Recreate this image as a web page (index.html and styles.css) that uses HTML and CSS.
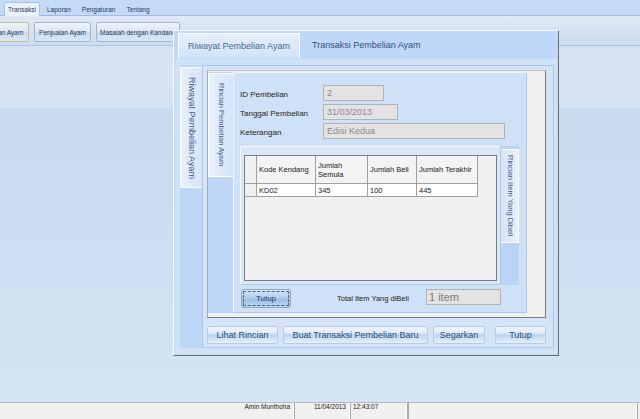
FILE: index.html
```html
<!DOCTYPE html>
<html>
<head>
<meta charset="utf-8">
<title>Riwayat Pembelian Ayam</title>
<link rel="stylesheet" href="styles.css">
</head>
<body>
<div class="app">
  <div class="menubar">
    <span class="menu-tab active">Transaksi</span>
    <span class="menu-tab">Laporan</span>
    <span class="menu-tab">Pengaturan</span>
    <span class="menu-tab">Tentang</span>
  </div>
  <div class="ribbon">
    <button class="rb-btn first">Pembelian Ayam</button>
    <button class="rb-btn second">Penjualan Ayam</button>
    <button class="rb-btn third">Masalah dengan Kandang</button>
  </div>
  <div class="desktop"></div>
  <div class="statusbar">
    <div class="sb-panel sb-user">Amin Munthoha</div>
    <div class="sb-panel sb-date">11/04/2013</div>
    <div class="sb-panel sb-time">12:43:07</div>
    <div class="sb-panel sb-rest"></div>
  </div>

  <div class="window">
    <div class="htab-head">
      <div class="htab sel">Riwayat Pembelian Ayam</div>
      <div class="htab">Transaksi Pembelian Ayam</div>
    </div>
    <div class="htab-page">
      <div class="vstrip"><div class="vtab vtab-main">Riwayat Pembelian Ayam</div></div>
      <div class="vpage">
        <div class="gpanel">
          <div class="rtabs">
            <div class="rstrip"><div class="vtab vtab-r">Rincian Pembelian Ayam</div></div>
            <div class="rpage">
              <div class="fields">
                <div class="flabel">ID Pembelian</div><div class="tbox w-id">2</div>
                <div class="flabel">Tanggal Pembelian</div><div class="tbox w-date">31/03/2013</div>
                <div class="flabel">Keterangan</div><div class="tbox w-ket">Edisi Kedua</div>
              </div>
              <div class="itabs">
                <div class="ipage">
                  <div class="grid">
                    <div class="gh rh"></div>
                    <div class="gh">Kode Kendang</div>
                    <div class="gh">Jumlah<br>Semula</div>
                    <div class="gh">Jumlah Beli</div>
                    <div class="gh">Jumlah Terakhir</div>
                    <div class="gc rh"></div>
                    <div class="gc">KD02</div>
                    <div class="gc">345</div>
                    <div class="gc">100</div>
                    <div class="gc">445</div>
                  </div>
                </div>
                <div class="istrip"><div class="vtab vtab-i">Rincian Item Yang Dibeli</div></div>
              </div>
              <div class="totals">
                <button class="btn-focus">Tutup</button>
                <span class="tlabel">Total Item Yang diBeli</span>
                <div class="tbox w-total">1 item</div>
              </div>
            </div>
          </div>
        </div>
        <div class="actions">
          <button class="btn b-lihat">Lihat Rincian</button>
          <button class="btn b-buat">Buat Transaksi Pembelian Baru</button>
          <button class="btn b-seg">Segarkan</button>
          <button class="btn b-tutup">Tutup</button>
        </div>
      </div>
    </div>
  </div>
</div>
</body>
</html>
```

FILE: styles.css
```css
* { box-sizing: border-box; }
html, body { margin: 0; padding: 0; }
body {
  width: 640px;
  height: 419px;
  overflow: hidden;
  font-family: "Liberation Sans", Arial, sans-serif;
}
button { font-family: "Liberation Sans", Arial, sans-serif; margin: 0; padding: 0; }

.app {
  position: relative;
  width: 640px;
  height: 419px;
  display: flex;
  flex-direction: column;
  background: #d4e3f3;
}

/* ---------- menu strip ---------- */
.menubar {
  height: 16px;
  flex: none;
  background: #c4daf7;
  border-bottom: 1px solid #9fbadc;
  display: flex;
  align-items: flex-end;
  padding-left: 4px;
  gap: 3px;
}
.menu-tab {
  height: 14px;
  line-height: 13px;
  padding: 0 3px;
  font-size: 6.5px;
  color: #1f3b63;
  margin-bottom: -1px;
  border: 1px solid transparent;
  border-bottom: none;
}
.menu-tab.active {
  background: #eaf1fb;
  border-color: #a9c2df;
  border-radius: 2px 2px 0 0;
}

/* ---------- ribbon ---------- */
.ribbon {
  height: 30px;
  flex: none;
  background: linear-gradient(#dfe9f5, #cddcee);
  border-bottom: 1px solid #a9c4e4;
  display: flex;
  align-items: flex-start;
  padding-top: 6px;
  gap: 5px;
  overflow: hidden;
}
.rb-btn {
  height: 20px;
  padding: 0;
  font-size: 6.5px;
  color: #1f3b63;
  background: linear-gradient(#eef4fa, #dbe6f3 50%, #ccdcee 51%, #d9e6f4);
  border: 1px solid #9fb5d0;
  border-radius: 2px;
  white-space: nowrap;
  overflow: hidden;
  flex: none;
}
.rb-btn.first { width: 60px; margin-left: -31px; border-color: #cbbf92; }
.rb-btn.second { width: 57px; }
.rb-btn.third { width: 84px; }

/* ---------- desktop ---------- */
.desktop {
  flex: 1;
  background: linear-gradient(to bottom, #d3e1f1 0px, #d7e4f3 4px, #d6e3f3 61px, #c9daef 62px, #cddef1 180px, #d4e4f3 100%);
}

/* ---------- status bar ---------- */
.statusbar {
  height: 17px;
  flex: none;
  background: #f0f0f0;
  border-top: 1px solid #b9b9b9;
  display: flex;
  font-size: 6.5px;
  color: #222;
}
.sb-panel {
  height: 100%;
  line-height: 7px;
  border-right: 1px solid #a9a9a9;
  box-shadow: inset -1px 0 0 #ffffff;
}
.sb-user { width: 295px; text-align: right; padding-right: 4px; }
.sb-date { width: 56px; text-align: right; padding-right: 4px; }
.sb-time { width: 57px; padding-left: 2px; }
.sb-rest { flex: 1; margin-right: 2px; border-left: 1px solid #a9a9a9; }

/* ---------- window ---------- */
.window {
  position: absolute;
  left: 173px;
  top: 30px;
  width: 386px;
  height: 326px;
  border: 1px solid;
  border-color: #f6f9fd #6e6e6e #6e6e6e #f6f9fd;
  background: #dbe7f6;
  display: flex;
  flex-direction: column;
}
.htab-head {
  height: 27px;
  flex: none;
  background: #bfd7f8;
  display: flex;
  align-items: flex-end;
  padding-left: 4px;
}
.htab {
  height: 25px;
  line-height: 24px;
  font-size: 9px;
  color: #2f4f7e;
  padding: 0 10px;
  margin-left: 2px;
  white-space: nowrap;
}
.htab.sel {
  width: 122px;
  margin-left: 0;
  padding: 0;
  text-align: center;
  color: #4a6890;
  background: linear-gradient(#e4eefa, #d2e3f7);
  border: 1px solid #fbfdff;
  border-bottom: none;
}
.htab-page {
  flex: 1;
  display: flex;
  background: #d0e2f7;
  border: 1px solid #c3d9f3;
  padding: 6px 5px 6px 5px;
}

/* vertical tab strips */
.vstrip {
  width: 22px;
  flex: none;
  background: #bdd6f6;
}
.vtab {
  writing-mode: vertical-rl;
  text-align: center;
  background: linear-gradient(to right, #e8f0fb, #d4e4f7);
  border: 1px solid #fbfdff;
  white-space: nowrap;
}
.vtab-main {
  margin-top: 2px;
  width: 22px;
  height: 121px;
  border-right: none;
  font-size: 9px;
  line-height: 20px;
  color: #3f5f8c;
}

.vpage {
  flex: 1;
  display: flex;
  flex-direction: column;
  background: #d3e4f8;
  border: 1px solid #a9c7ec;
  padding: 4px 7px 3px 4px;
}

/* gray panel */
.gpanel {
  height: 248px;
  flex: none;
  background: #f0f0f0;
  border: 1px solid;
  border-color: #c4c4c4 #7b7b7b #7b7b7b #a8a8a8;
  padding: 1px 18px 4px 0;
  display: flex;
}
.rtabs {
  flex: 1;
  display: flex;
}
.rstrip {
  width: 25px;
  flex: none;
  background: #bed7f7;
}
.vtab-r {
  margin-top: 1px;
  width: 25px;
  height: 104px;
  border-right: none;
  font-size: 7.5px;
  line-height: 23px;
  color: #3f5f8c;
}
.rpage {
  flex: 1;
  display: flex;
  flex-direction: column;
  background: #cfe1f6;
  border: 1px solid;
  border-color: #eef4fb #abc9ee #abc9ee #eef4fb;
  padding: 12px 0 0 6px;
}

/* fields */
.fields {
  display: grid;
  grid-template-columns: 83px auto;
  grid-auto-rows: 16px;
  row-gap: 3px;
  align-items: center;
}
.flabel {
  font-size: 8px;
  color: #1e1e1e;
  padding-top: 2px;
}
.tbox {
  height: 16px;
  background: #e3e3e3;
  border: 1px solid #b3b3b3;
  color: #8a8a8a;
  font-size: 9px;
  line-height: 14px;
  padding-left: 3px;
  white-space: nowrap;
}
.w-id { width: 61px; }
.w-date { width: 75px; }
.w-ket { width: 182px; }

/* item tab control */
.itabs {
  margin-top: 7px;
  width: 279px;
  height: 139px;
  display: flex;
}
.ipage {
  flex: 1;
  background: #d9e8f9;
  border: 1px solid;
  border-color: #f6f9fe #abc9ee #abc9ee #f6f9fe;
  padding: 8px 3px 3px 3px;
  display: flex;
}
.istrip {
  width: 18px;
  flex: none;
  background: #bad4f6;
}
.vtab-i {
  margin-top: 3px;
  width: 18px;
  height: 94px;
  border-left: none;
  font-size: 7.5px;
  line-height: 16px;
  color: #3f5f8c;
  background: linear-gradient(to left, #e8f0fb, #d4e4f7);
}

/* data grid */
.grid {
  flex: 1;
  background: #f0f0f0;
  border: 1px solid #7c7c7c;
  display: grid;
  grid-template-columns: 12px 59px 52px 49px 61px;
  grid-template-rows: 28px 13px;
  align-content: start;
  font-size: 7.5px;
  color: #222222;
}
.gh, .gc {
  color: #222222;
  border-right: 1px solid #a0a0a0;
  border-bottom: 1px solid #a0a0a0;
  padding-left: 2px;
  display: flex;
  align-items: center;
  white-space: nowrap;
}
.gh { background: #f3f3f3; line-height: 9px; }
.gc { background: #ffffff; line-height: 11px; }
.gc.rh, .gh.rh { background: #f0f0f0; }

/* totals row */
.totals {
  margin-top: 4px;
  display: flex;
  align-items: flex-start;
  width: 279px;
}
.btn-focus {
  width: 50px;
  height: 19px;
  margin-left: 1px;
  font-size: 8px;
  color: #1f3a5f;
  background: linear-gradient(#d3e4f6, #b3cfee 45%, #9fc0e6 55%, #bcd5f1);
  border: 1px solid #8ea9c8;
  border-radius: 2px;
  outline: 1px dashed #59636e;
  outline-offset: -3px;
}
.tlabel {
  margin-left: 46px;
  font-size: 7.5px;
  color: #222;
  line-height: 19px;
  white-space: nowrap;
}
.w-total {
  width: 75px;
  margin-left: auto;
  margin-right: 18px;
  font-size: 11px;
  color: #7a7a7a;
  line-height: 14px;
  padding-left: 2px;
}

/* bottom actions */
.actions {
  margin-top: 8px;
  display: flex;
  gap: 5px;
}
.btn {
  height: 18px;
  font-size: 9px;
  color: #2b4b74;
  background: linear-gradient(#eef4fb 0%, #e2ecf8 35%, #bcd5f0 50%, #c9ddf4 65%, #e5eff9 100%);
  border: 1px solid #b9cbe0;
  border-radius: 2px;
  white-space: nowrap;
}
.b-lihat { width: 71px; }
.b-buat { width: 145px; }
.b-seg { width: 52px; }
.b-tutup { width: 51px; margin-left: 5px; }
```
